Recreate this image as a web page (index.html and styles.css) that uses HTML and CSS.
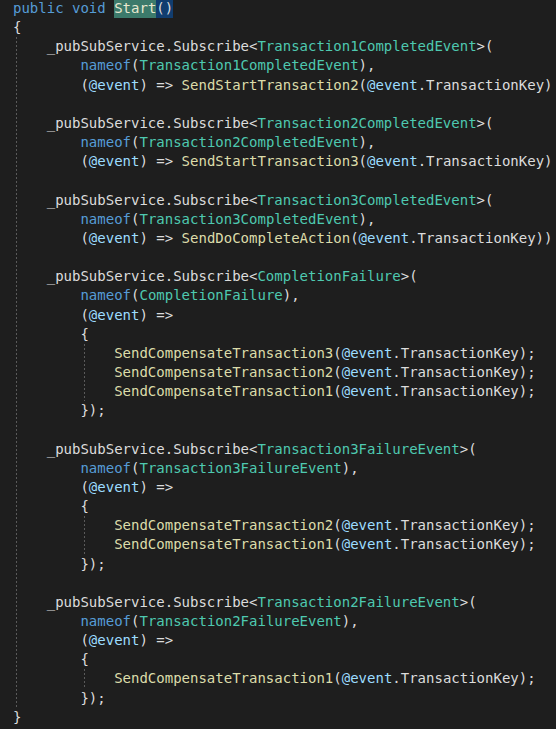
FILE: index.html
```html
<!DOCTYPE html>
<html lang="en">
<head>
    <meta charset="UTF-8">
    <title>Start - Code</title>
    <link rel="stylesheet" href="styles.css">
</head>
<body>
<div class="editor">
<div class="ln"><span class="kw">public</span> <span class="kw">void</span> <span class="ref">Start</span><span class="brace-match">()</span></div>
<div class="ln">{</div>
<div class="body">
<div class="ln">    _pubSubService.Subscribe&lt;<span class="type">Transaction1CompletedEvent</span>&gt;(</div>
<div class="ln">        <span class="kw">nameof</span>(<span class="type">Transaction1CompletedEvent</span>),</div>
<div class="ln">        (<span class="param">@event</span>) =&gt; <span class="fn">SendStartTransaction2</span>(<span class="param">@event</span>.TransactionKey)</div>
<div class="ln"> </div>
<div class="ln">    _pubSubService.Subscribe&lt;<span class="type">Transaction2CompletedEvent</span>&gt;(</div>
<div class="ln">        <span class="kw">nameof</span>(<span class="type">Transaction2CompletedEvent</span>),</div>
<div class="ln">        (<span class="param">@event</span>) =&gt; <span class="fn">SendStartTransaction3</span>(<span class="param">@event</span>.TransactionKey)</div>
<div class="ln"> </div>
<div class="ln">    _pubSubService.Subscribe&lt;<span class="type">Transaction3CompletedEvent</span>&gt;(</div>
<div class="ln">        <span class="kw">nameof</span>(<span class="type">Transaction3CompletedEvent</span>),</div>
<div class="ln">        (<span class="param">@event</span>) =&gt; <span class="fn">SendDoCompleteAction</span>(<span class="param">@event</span>.TransactionKey))</div>
<div class="ln"> </div>
<div class="ln">    _pubSubService.Subscribe&lt;<span class="type">CompletionFailure</span>&gt;(</div>
<div class="ln">        <span class="kw">nameof</span>(<span class="type">CompletionFailure</span>),</div>
<div class="ln">        (<span class="param">@event</span>) =&gt;</div>
<div class="ln">        {</div>
<div class="inner">
<div class="ln">            <span class="fn">SendCompensateTransaction3</span>(<span class="param">@event</span>.TransactionKey);</div>
<div class="ln">            <span class="fn">SendCompensateTransaction2</span>(<span class="param">@event</span>.TransactionKey);</div>
<div class="ln">            <span class="fn">SendCompensateTransaction1</span>(<span class="param">@event</span>.TransactionKey);</div>
</div>
<div class="ln">        });</div>
<div class="ln"> </div>
<div class="ln">    _pubSubService.Subscribe&lt;<span class="type">Transaction3FailureEvent</span>&gt;(</div>
<div class="ln">        <span class="kw">nameof</span>(<span class="type">Transaction3FailureEvent</span>),</div>
<div class="ln">        (<span class="param">@event</span>) =&gt;</div>
<div class="ln">        {</div>
<div class="inner">
<div class="ln">            <span class="fn">SendCompensateTransaction2</span>(<span class="param">@event</span>.TransactionKey);</div>
<div class="ln">            <span class="fn">SendCompensateTransaction1</span>(<span class="param">@event</span>.TransactionKey);</div>
</div>
<div class="ln">        });</div>
<div class="ln"> </div>
<div class="ln">    _pubSubService.Subscribe&lt;<span class="type">Transaction2FailureEvent</span>&gt;(</div>
<div class="ln">        <span class="kw">nameof</span>(<span class="type">Transaction2FailureEvent</span>),</div>
<div class="ln">        (<span class="param">@event</span>) =&gt;</div>
<div class="ln">        {</div>
<div class="inner">
<div class="ln">            <span class="fn">SendCompensateTransaction1</span>(<span class="param">@event</span>.TransactionKey);</div>
</div>
<div class="ln">        });</div>
</div>
<div class="ln">}</div>
</div>
</body>
</html>
```

FILE: styles.css
```css
* {
    margin: 0;
    padding: 0;
    box-sizing: border-box;
}

body {
    background-color: #1e1e1e;
    color: #dcdcdc;
    font-family: 'DejaVu Sans Mono', 'Liberation Mono', monospace;
    font-size: 14px;
    overflow: hidden;
}

.editor {
    padding-left: 13px;
    margin-top: -1px;
}

.ln {
    white-space: pre;
    line-height: 19.16px;
    height: 19.16px;
}

/* indent guides */
.body {
    margin-left: -13px;
    padding-left: 13px;
    background-image: repeating-linear-gradient(to bottom, #5a5a5a 0 2px, transparent 2px 4px);
    background-size: 1px 100%;
    background-position: 16px 0;
    background-repeat: no-repeat;
}

.inner {
    margin-left: -13px;
    padding-left: 13px;
    background-image: repeating-linear-gradient(to bottom, #5a5a5a 0 2px, transparent 2px 4px);
    background-size: 1px 100%;
    background-position: 84px 0;
    background-repeat: no-repeat;
}

.kw {
    color: #569cd6;
}

.type {
    color: #4ec9b0;
}

.fn {
    color: #dcdcaa;
}

.param {
    color: #9cdcfe;
}

.ref {
    background-color: #3c7a6b;
    color: #e8e8d0;
    display: inline-block;
    height: 19px;
}

.brace-match {
    background-color: #113d6f;
    display: inline-block;
    height: 19px;
}
```
